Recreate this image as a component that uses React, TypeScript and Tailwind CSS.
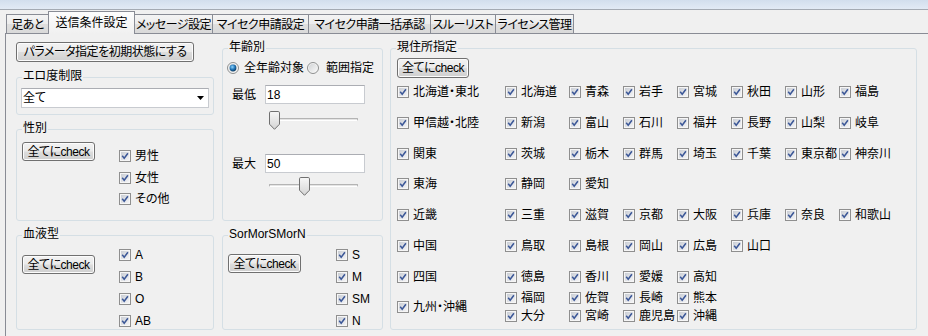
import React from 'react';
import clsx from 'clsx';

const tabs = [
  { label: '足あと', w: 'w-[43px]' },
  { label: '送信条件設定', w: 'w-[87px]', active: true },
  { label: 'メッセージ設定', w: 'w-[79px]' },
  { label: 'マイセク申請設定', w: 'w-[97px]' },
  { label: 'マイセク申請一括承認', w: 'w-[123px]' },
  { label: 'スルーリスト', w: 'w-[66px]' },
  { label: 'ライセンス管理', w: 'w-[79px]' },
];

const regions: [string, string[]][] = [
  ['北海道・東北', ['北海道', '青森', '岩手', '宮城', '秋田', '山形', '福島']],
  ['甲信越・北陸', ['新潟', '富山', '石川', '福井', '長野', '山梨', '岐阜']],
  ['関東', ['茨城', '栃木', '群馬', '埼玉', '千葉', '東京都', '神奈川']],
  ['東海', ['静岡', '愛知']],
  ['近畿', ['三重', '滋賀', '京都', '大阪', '兵庫', '奈良', '和歌山']],
  ['中国', ['鳥取', '島根', '岡山', '広島', '山口']],
  ['四国', ['徳島', '香川', '愛媛', '高知']],
];

const kyushu = [
  ['福岡', '佐賀', '長崎', '熊本'],
  ['大分', '宮崎', '鹿児島', '沖縄'],
];

function CheckBox() {
  return (
    <svg width="12" height="12" viewBox="0 0 12 12" className="shrink-0">
      <defs>
        <linearGradient id="cbfill" x1="0" y1="0" x2="1" y2="1">
          <stop offset="0" stopColor="#c9cdd4" />
          <stop offset="1" stopColor="#f4f4f6" />
        </linearGradient>
      </defs>
      <rect x="0.5" y="0.5" width="11" height="11" fill="#f6f6f6" stroke="#8f8f8f" />
      <rect x="2" y="2" width="8" height="8" fill="url(#cbfill)" />
      <path d="M3.2 5.8 L5.2 8.3 L8.9 3.2" fill="none" stroke="#3b5797" strokeWidth="1.5" />
    </svg>
  );
}

function Check({ label }: { label: string }) {
  return (
    <div className="flex h-[12px] items-center gap-[4px] whitespace-nowrap">
      <CheckBox />
      <span className="leading-[12px]">{label}</span>
    </div>
  );
}

function Btn({ children, className }: { children: React.ReactNode; className?: string }) {
  return (
    <button
      className={clsx(
        'flex items-center justify-center whitespace-nowrap rounded-[3px] border border-[#707070] bg-[linear-gradient(#f2f2f2_0%,#ebebeb_48%,#dddddd_52%,#cfcfcf_100%)] tracking-[-0.5px] shadow-[inset_0_0_0_1px_#fcfcfc]',
        className
      )}
    >
      {children}
    </button>
  );
}

function Group({ label, className, children }: { label: string; className?: string; children?: React.ReactNode }) {
  return (
    <div className={clsx('relative rounded-[3px] border border-[#d5dfe5]', className)}>
      <span className="absolute -top-[9px] left-[5px] bg-[#f0f0f0] px-[1px] leading-[14px]">{label}</span>
      {children}
    </div>
  );
}

function Radio({ checked, className }: { checked?: boolean; className?: string }) {
  return (
    <svg width="12" height="12" viewBox="0 0 12 12" className={clsx('shrink-0', className)}>
      <defs>
        <radialGradient id="rdot" cx="0.4" cy="0.35" r="0.7">
          <stop offset="0" stopColor="#8fd6ff" />
          <stop offset="0.55" stopColor="#1f72b4" />
          <stop offset="1" stopColor="#0c3658" />
        </radialGradient>
        <linearGradient id="rbg" x1="0" y1="0" x2="1" y2="1">
          <stop offset="0" stopColor="#d2d4d6" />
          <stop offset="1" stopColor="#f8f8f8" />
        </linearGradient>
      </defs>
      <circle cx="6" cy="6" r="5.5" fill="#f4f4f4" stroke="#8e8f8f" />
      <circle cx="6" cy="6" r="4.2" fill="url(#rbg)" />
      {checked && <circle cx="6" cy="6" r="3.4" fill="url(#rdot)" />}
    </svg>
  );
}

function Slider({ pos }: { pos: number }) {
  return (
    <div className="relative h-[19px] w-[89px]">
      <div className="absolute left-0 right-0 top-[7px] h-[3px] rounded-[1px] border border-[#b4b4b4] border-b-white bg-[#e4e4e4]" />
      <svg width="11" height="19" viewBox="0 0 11 19" className="absolute top-0" style={{ left: pos }}>
        <defs>
          <linearGradient id="thumb" x1="0" y1="0" x2="0" y2="1">
            <stop offset="0" stopColor="#f7f7f7" />
            <stop offset="1" stopColor="#d4d4d4" />
          </linearGradient>
        </defs>
        <path
          d="M0.5 1.8 Q0.5 0.5 1.8 0.5 H9.2 Q10.5 0.5 10.5 1.8 V13.2 L5.5 18.3 L0.5 13.2 Z"
          fill="url(#thumb)"
          stroke="#707070"
        />
      </svg>
    </div>
  );
}

function TextBox({ value }: { value: string }) {
  return (
    <div className="flex h-[19px] w-[100px] items-center border border-[#c8cbd0] border-t-[#abadb3] bg-white pl-[1px]">
      {value}
    </div>
  );
}

export default function App() {
  return (
    <div className="h-[336px] w-[928px] overflow-hidden bg-[#f0f0f0] text-[12px] leading-[14px] text-black [font-family:'Liberation_Sans','Noto_Sans_CJK_JP',sans-serif] [font-feature-settings:'palt']">
      <div className="h-[9px] bg-[linear-gradient(#d2deed,#e2eaf5)]" />
      <div className="h-px bg-[#a4aab3]" />

      {/* tabs */}
      <div className="flex h-[23px] items-end pl-[6px]">
        {tabs.map((t, i) =>
          t.active ? (
            <div
              key={t.label}
              className={clsx(
                'relative z-10 -mb-px -ml-px flex h-[23px] items-center justify-center border border-b-0 border-[#898c95] bg-[linear-gradient(#fdfdfd,#f0f0f0)]',
                t.w
              )}
            >
              {t.label}
            </div>
          ) : (
            <div
              key={t.label}
              className={clsx(
                'flex h-[19px] items-center justify-center whitespace-nowrap border border-b-0 border-[#898c95] bg-[linear-gradient(#f4f4f4_0%,#ececec_50%,#dfdfdf_50%,#d9d9d9_100%)] pt-[1px] tracking-[-0.5px]',
                i > 0 && '-ml-px',
                t.w
              )}
            >
              {t.label}
            </div>
          )
        )}
      </div>

      {/* panel */}
      <div className="ml-[5px] flex h-[303px] items-start border-l border-t border-[#898c95] pl-[10px] pt-[8px]">
        {/* left column */}
        <div className="flex w-[198px] flex-col">
          <Btn className="h-[20px] w-[178px]">パラメータ指定を初期状態にする</Btn>

          <Group label="エロ度制限" className="mt-[15px] h-[38px] pl-[4px] pt-[10px]">
            <div className="flex h-[20px] w-[188px] items-center justify-between border border-[#c8cbd0] border-t-[#abadb3] bg-white pl-[1px] pr-[4px]">
              <span>全て</span>
              <svg width="7" height="4" viewBox="0 0 7 4">
                <path d="M0 0H7L3.5 4Z" fill="#000" />
              </svg>
            </div>
          </Group>

          <Group label="性別" className="mt-[14px] flex h-[92px] items-start pl-[5px] pt-[12px]">
            <Btn className="h-[19px] w-[73px]">全てにcheck</Btn>
            <div className="ml-[24px] mt-[8px] flex flex-col gap-[9.5px]">
              <Check label="男性" />
              <Check label="女性" />
              <Check label="その他" />
            </div>
          </Group>

          <Group label="血液型" className="mt-[14px] flex h-[95px] items-start pl-[5px]">
            <Btn className="mt-[19px] h-[19px] w-[73px]">全てにcheck</Btn>
            <div className="ml-[24px] mt-[13px] flex flex-col gap-[10px]">
              <Check label="A" />
              <Check label="B" />
              <Check label="O" />
              <Check label="AB" />
            </div>
          </Group>
        </div>

        {/* middle column */}
        <div className="ml-[8px] flex w-[161px] flex-col pt-[6px]">
          <Group label="年齢別" className="h-[173px]">
            <div className="ml-[4px] mt-[12px] flex h-[13px] items-center whitespace-nowrap">
              <Radio checked />
              <span className="ml-[5px]">全年齢対象</span>
              <Radio className="ml-[3px]" />
              <span className="ml-[7px]">範囲指定</span>
            </div>
            <div className="mt-[11px] flex items-center pl-[9px]">
              <span className="w-[33px]">最低</span>
              <TextBox value="18" />
            </div>
            <div className="ml-[46px] mt-[7px]">
              <Slider pos={0} />
            </div>
            <div className="mt-[24px] flex items-center pl-[9px]">
              <span className="w-[33px]">最大</span>
              <TextBox value="50" />
            </div>
            <div className="ml-[46px] mt-[4px]">
              <Slider pos={30} />
            </div>
          </Group>

          <Group label="SorMorSMorN" className="mt-[14px] flex h-[95px] items-start pl-[5px]">
            <Btn className="mt-[18px] h-[19px] w-[73px]">全てにcheck</Btn>
            <div className="ml-[35px] mt-[13px] flex flex-col gap-[10px]">
              <Check label="S" />
              <Check label="M" />
              <Check label="SM" />
              <Check label="N" />
            </div>
          </Group>
        </div>

        {/* right column */}
        <Group label="現住所指定" className="ml-[7px] mt-[6px] h-[282px] w-[527px] pl-[6px] pt-[9px]">
          <Btn className="h-[20px] w-[72px]">全てにcheck</Btn>
          <div className="-mt-[1.4px]">
            {regions.map(([region, prefs]) => (
              <div
                key={region}
                className="grid h-[30.8px] grid-cols-[108px_64px_54px_54px_54px_54px_54px_54px] items-center"
              >
                <Check label={region} />
                {prefs.map((p) => (
                  <Check key={p} label={p} />
                ))}
              </div>
            ))}
            <div className="flex">
              <div className="flex w-[108px] items-center">
                <Check label="九州・沖縄" />
              </div>
              <div className="flex flex-col gap-[5.5px]">
                {kyushu.map((row, i) => (
                  <div key={i} className="grid grid-cols-[64px_54px_54px_54px]">
                    {row.map((p) => (
                      <Check key={p} label={p} />
                    ))}
                  </div>
                ))}
              </div>
            </div>
          </div>
        </Group>
      </div>
    </div>
  );
}
